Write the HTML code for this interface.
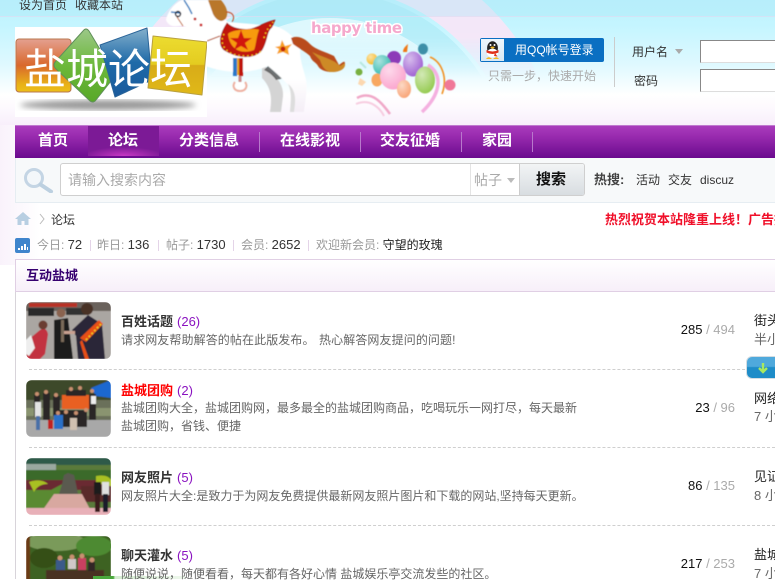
<!DOCTYPE html>
<html lang="zh"><head><meta charset="utf-8"><title>盐城论坛</title>
<style>
html,body{margin:0;padding:0}
body{width:775px;height:579px;overflow:hidden;position:relative;background:#fff;font:12px/16px "Liberation Sans","WenQuanYi Zen Hei","Noto Sans CJK SC",sans-serif;color:#444}
.t{position:absolute;white-space:nowrap;line-height:16px}
.b{font-weight:bold}
.a{position:absolute}
.ttl{font-weight:bold;color:#333;left:121px;font-size:13px;margin-top:1px}
.ttl i{font-style:normal;font-weight:normal;color:#8a12c0;margin-left:4px}
.d{left:121px;color:#666}
.n{color:#fff;font-size:15px;font-weight:bold;top:133px}
.s{position:absolute;top:132px;width:1px;height:20px;background:#b878cc}
.dash{position:absolute;left:29px;width:746px;border-top:1px dashed #cfcfcf}
.c{right:40px;color:#111;font-size:13px}.c i{font-style:normal;color:#aaa}
.l{left:754px;color:#222;font-size:13px}
.m{left:754px;color:#666;font-size:13px}
.st{font-size:12px;color:#999}.st b{font-weight:normal;font-size:13px;color:#333}
.th{position:absolute;left:26px;width:85px;height:57px;border-radius:6px;overflow:hidden}
</style></head><body>
<div class="a" style="left:0;top:0;width:775px;height:125px;background:linear-gradient(#bff3fd 0,#c4f5ff 25px,#dff9ff 65px,#fff 95px,#fdf9fe 108px,#f8effb 125px)"></div>
<div class="a" style="left:0;top:125px;width:40px;height:140px;background:linear-gradient(90deg,#f9f2fb,#fff)"></div>
<svg class="a" style="left:0;top:0" width="775" height="125" viewBox="0 0 775 125">
<defs><filter id="bl"><feGaussianBlur stdDeviation=".5"/></filter>
<linearGradient id="fd" x1="0" y1="0" x2="0" y2="125" gradientUnits="userSpaceOnUse"><stop offset="0" stop-color="#fff"/><stop offset=".3" stop-color="#fff"/><stop offset=".62" stop-color="#000"/></linearGradient>
<mask id="mk"><rect width="775" height="125" fill="url(#fd)"/></mask>
<radialGradient id="bb" cx=".35" cy=".3" r=".8"><stop offset="0" stop-color="#fff"/><stop offset="1" stop-color="#fff" stop-opacity="0"/></radialGradient>
<linearGradient id="leg" x1="0" y1="0" x2="0" y2="1"><stop offset=".7" stop-color="#fff"/><stop offset="1" stop-color="#f4eef6"/></linearGradient>
</defs>
<g mask="url(#mk)" fill="none">
<circle cx="330" cy="170" r="205" stroke="#f6e6f8" stroke-width="46" stroke-opacity=".95"/>
<circle cx="330" cy="170" r="165" stroke="#a8e8f4" stroke-opacity=".55" stroke-width="26"/>
<circle cx="330" cy="170" r="130" stroke="#e8fafc" stroke-opacity=".7" stroke-width="44"/>
</g>
<rect y="0" width="775" height="17" fill="#a8e4f5" fill-opacity=".35"/>
<rect y="16" width="775" height="1" fill="#f0d8f0" fill-opacity=".5"/>
<g filter="url(#bl)">
<path d="M262 64 C272 72 284 82 283 96 L281 112 L270 112 C272 100 272 88 262 78Z" fill="#d4d4d4"/>
<path d="M268 66 C274 66 280 72 284 78 L276 80 C272 74 268 72 264 70Z" fill="#444" fill-opacity=".75"/>
<path d="M166 20 C168 10 176 2 182 0 L208 0 C214 8 220 16 228 22 L275 26 C288 30 298 40 300 50 C300 62 304 70 306 80 C308 90 305 100 304 112 L290 112 C291 100 292 92 289 86 C282 78 275 72 268 66 C250 74 228 74 205 66 L195 40 C190 30 186 24 178 26 C172 27 168 25 166 20Z" fill="url(#leg)"/>
<path d="M288 84 C296 90 296 100 294 112 L290 112 C291 100 292 92 288 84Z" fill="#ddd"/>
<path d="M208 0 L221 0 C226 6 229 12 226 18 C222 24 216 20 213 14Z" fill="#b9772b"/>
<path d="M226 12 C232 12 236 16 232 22" stroke="#c0431a" fill="none"/>
<path d="M207 41 L220 36" stroke="#b54a1c" stroke-width="1.2"/>
<path d="M184 0 L189 8 L192 14 M171 12 L180 13" stroke="#2a7dc0" stroke-width="1.5" fill="none"/>
<path d="M177 17 L183 26" stroke="#c06020" fill="none"/>
<circle cx="178" cy="14" r="2.5" fill="none" stroke="#112" stroke-width="1.4"/>
<path d="M227 23 C221 32 217 44 224 50 C240 60 256 58 262 50 C268 40 266 32 272 27 L275 20 C264 22 258 28 250 29 C240 30 232 28 227 23Z" fill="#c0140f" stroke="#8e0d0a" stroke-width=".6"/>
<path d="M228 34 C232 29 258 28 259 30 C256 38 256 46 254 50 C244 54 230 52 228 34Z" fill="#f79a10"/>
<path d="M241 30 L244 38 L252 38 L245 43 L248 50 L241 46 L234 50 L237 43 L230 38 L238 38Z" fill="#d2180f"/>
<path d="M224 34 C219 42 224 52 236 55 C246 57 258 56 262 50 M264 38 C266 30 270 26 273 22" stroke="#f8d020" stroke-width="1.4" stroke-dasharray="1.4 3" fill="none"/>
<rect x="233" y="58" width="4" height="18" fill="#2a78c8"/><rect x="237" y="58" width="3" height="17" fill="#e8a820"/><rect x="239" y="58" width="4" height="18" fill="#c0140f"/>
<path d="M240 76 L240 82" stroke="#c88" stroke-width="3"/>
<path d="M235 82 C232 86 234 91 240 91 C246 91 248 86 245 82" fill="#fff" stroke="#eeb0a0" stroke-width="2"/>
<path d="M282 40 L285 46 L292 44 L288 49 L289 55 L283 52 L277 54 L279 49 L275 47 L280 46Z" fill="#f8a020"/><circle cx="283" cy="49" r="2.4" fill="#c0200f"/>
<circle cx="195" cy="19" r="1.4" fill="#c02020"/><circle cx="201" cy="25" r="1.5" fill="#d03030"/>
<path d="M291 38 C297 35 305 38 310 44 C316 50 326 52 334 56 L339 65 C343 62 345 60 345 64 C345 70 338 72 332 72 C326 72 320 70 318 66 C316 62 312 62 310 56 C306 52 298 48 293 44Z" fill="#b94b1c"/>
<path d="M312 52 C320 56 328 58 335 62 L340 66 C344 64 345 62 345 65 C344 71 336 72 330 72 C324 70 322 66 320 60Z" fill="#cd8a28"/>
<g transform="translate(300 0)">
<path d="M57 98 C72 90 82 103 90 114" stroke="#f0a8c8" stroke-width="2.5" fill="none"/>
<path d="M56 104 C70 98 80 108 84 116" stroke="#f5c0d8" stroke-width="2" fill="none" opacity=".8"/>
<path d="M130 57 C142 62 148 78 142 94" stroke="#f09020" stroke-width="1.6" fill="none"/>
<path d="M128 65 C144 75 140 95 122 112" stroke="#f4b0e0" stroke-width="3.5" fill="none"/>
<circle cx="72" cy="59" r="5.5" fill="#f7b81e"/><circle cx="72" cy="59" r="5.5" fill="url(#bb)" opacity=".6"/>
<ellipse cx="94" cy="58" rx="7" ry="7" fill="#8d3bb8"/>
<ellipse cx="82" cy="65" rx="9" ry="10" fill="#2cb8ac"/><ellipse cx="82" cy="65" rx="9" ry="10" fill="url(#bb)" opacity=".6"/>
<ellipse cx="113" cy="64" rx="10" ry="12.5" fill="#9a58d0"/><ellipse cx="113" cy="64" rx="10" ry="12.5" fill="url(#bb)" opacity=".6"/>
<ellipse cx="123" cy="49" rx="5" ry="5.5" fill="#3c8fa8"/>
<ellipse cx="77" cy="80" rx="5.5" ry="6.5" fill="#f8a860"/>
<ellipse cx="93" cy="76" rx="13" ry="13.5" fill="#fba0cc"/><ellipse cx="93" cy="76" rx="13" ry="13.5" fill="url(#bb)" opacity=".6"/>
<ellipse cx="104" cy="89" rx="7" ry="9" fill="#f8a070"/><ellipse cx="104" cy="89" rx="7" ry="9" fill="url(#bb)" opacity=".6"/>
<ellipse cx="125" cy="80" rx="10" ry="13.5" fill="#90c848"/><ellipse cx="125" cy="80" rx="10" ry="13.5" fill="url(#bb)" opacity=".6"/>
<circle cx="150" cy="85" r="5.5" fill="#f07898"/>
<circle cx="59" cy="72" r="3.5" fill="#78b040"/>
<path d="M103 52 C103 48 106 46 108 44 L107 52Z" fill="#f07818"/>
<path d="M60 78 L66 82 L62 86 L58 84Z" fill="#fcd8b0"/>
<path d="M60 62 L66 68" stroke="#b8e8e0" stroke-width="2"/>
</g>
</g>
<text x="311" y="33" font-family="DejaVu Sans" font-size="15" font-weight="bold" fill="#f5a8cc" stroke="#fff" stroke-width="3" paint-order="stroke" textLength="91">happy time</text>
</svg>
<span class="t" style="left:19px;top:-3px;color:#333">设为首页</span>
<span class="t" style="left:75px;top:-3px;color:#333">收藏本站</span>
<div class="a" style="left:15px;top:27px;width:192px;height:90px;background:#fff"></div>
<svg class="a" style="left:15px;top:27px" width="192" height="90" viewBox="0 0 192 90">
<defs><linearGradient id="l1" x1="0" y1="0" x2="0" y2="1"><stop offset="0" stop-color="#e4a090"/><stop offset=".5" stop-color="#d9682c"/><stop offset=".85" stop-color="#e8b018"/><stop offset="1" stop-color="#ecc018"/></linearGradient>
<linearGradient id="l2" x1="0" y1="0" x2="0" y2="1"><stop offset="0" stop-color="#9cc888"/><stop offset=".5" stop-color="#6cb83a"/><stop offset="1" stop-color="#58a828"/></linearGradient>
<linearGradient id="l3" x1="0" y1="0" x2="0" y2="1"><stop offset="0" stop-color="#84b0cc"/><stop offset=".5" stop-color="#1e6aa8"/><stop offset="1" stop-color="#1a5a9c"/></linearGradient>
<linearGradient id="l4" x1="0" y1="0" x2="0" y2="1"><stop offset="0" stop-color="#ecdc30"/><stop offset=".48" stop-color="#e4cc20"/><stop offset=".5" stop-color="#d8ac18"/><stop offset="1" stop-color="#e0b818"/></linearGradient>
<filter id="sh"><feGaussianBlur stdDeviation="3"/></filter></defs>
<ellipse cx="93" cy="78" rx="88" ry="5" fill="#999" filter="url(#sh)"/>
<rect x="1" y="12" width="55" height="53" rx="3" fill="url(#l1)" stroke="#b87850"/>
<path d="M68 4 Q71 0 74 4 L98 44 Q100 50 96 54 L81 73 Q78 77 74 73 L41 42 Q37 38 41 34Z" fill="url(#l2)" stroke="#60905a" stroke-width="1"/>
<path d="M85 18 L132 1 L137 53 L100 70Z" fill="url(#l3)" stroke="#2a6498" stroke-width="1" stroke-linejoin="round"/>
<path d="M138 9 L192 15 L187 68 L133 61Z" fill="url(#l4)" stroke="#b8a040" stroke-linejoin="round"/>
</svg>
<span class="t" style="left:24px;top:42px;line-height:50px;font-size:42px;color:#fff;font-family:'WenQuanYi Zen Hei','Noto Sans CJK SC',sans-serif">盐城论坛</span>
<div class="a" style="left:480px;top:38px;width:124px;height:24px;background:#0a6fc2;border-radius:2px"></div>
<div class="a" style="left:481px;top:39px;width:23px;height:22px;background:linear-gradient(#eef6fc,#d8e8f4)"></div>
<svg class="a" style="left:485px;top:41px" width="15" height="18" viewBox="0 0 15 18"><ellipse cx="7.5" cy="7" rx="5.4" ry="6.8" fill="#222"/><ellipse cx="7.5" cy="12" rx="5.5" ry="4.4" fill="#fff"/><path d="M1.5 9 Q7.5 12 13.5 9 L13.5 11.5 Q7.5 14.5 1.5 11.5Z" fill="#e0301a"/><path d="M10 12 L12.5 15.5 L9 15Z" fill="#e0301a"/><ellipse cx="7.5" cy="6.5" rx="2" ry="1" fill="#f5b820"/><circle cx="5.5" cy="4" r="1" fill="#fff"/><circle cx="9.5" cy="4" r="1" fill="#fff"/><path d="M1 18 Q3.5 14.5 7 18Z M8 18 Q11.5 14.5 14 18Z" fill="#f5b820"/></svg>
<span class="t" style="left:515px;top:42px;color:#fff">用QQ帐号登录</span>
<span class="t" style="left:488px;top:68px;color:#aaa">只需一步，快速开始</span>
<div class="a" style="left:614px;top:37px;width:1px;height:50px;background:#ccc"></div>
<span class="t" style="left:632px;top:44px;color:#333">用户名</span>
<div class="a" style="left:675px;top:49px;border:4px solid transparent;border-top:5px solid #aaa;border-bottom:0"></div>
<span class="t" style="left:634px;top:73px;color:#333">密码</span>
<div class="a" style="left:700px;top:40px;width:80px;height:21px;background:#fff;border:1px solid #ddd;border-top-color:#888;border-left-color:#888"></div>
<div class="a" style="left:700px;top:69px;width:80px;height:21px;background:#fff;border:1px solid #ddd;border-top-color:#888;border-left-color:#888"></div>
<div class="a" style="left:15px;top:125px;width:760px;height:33px;background:linear-gradient(#a93cbc 0,#9a2cb0 30%,#6a0a8e 100%);border-top:1px solid #c07ad0;box-sizing:border-box"></div>
<div class="a" style="left:88px;top:126px;width:71px;height:30px;background:radial-gradient(ellipse 40px 9px at 50% 100%,#c838c4,rgba(200,56,196,0) 100%),#7c1a96"></div>
<span class="t n" style="left:38px">首页</span>
<span class="t n" style="left:108px">论坛</span>
<span class="t n" style="left:179px">分类信息</span><i class="s" style="left:259px"></i>
<span class="t n" style="left:280px">在线影视</span><i class="s" style="left:360px"></i>
<span class="t n" style="left:380px">交友征婚</span><i class="s" style="left:461px"></i>
<span class="t n" style="left:482px">家园</span><i class="s" style="left:532px"></i>
<div class="a" style="left:15px;top:158px;width:760px;height:45px;box-sizing:border-box;background:#f7f9fa;border:1px solid #e6edf2;border-top:0;border-right:0"></div>
<svg class="a" style="left:23px;top:168px" width="31" height="25" viewBox="0 0 31 25"><circle cx="11" cy="10" r="8.5" fill="#f3f7fa" stroke="#c4d5e4" stroke-width="3"/><path d="M17.5 16.5 L28 23.5" stroke="#bcd0e0" stroke-width="4" stroke-linecap="round"/></svg>
<div class="a" style="left:60px;top:163px;width:525px;height:33px;box-sizing:border-box;background:#fff;border:1px solid #cfcfcf;border-radius:3px"></div>
<span class="t" style="left:68px;top:172px;font-size:14px;color:#aaa">请输入搜索内容</span>
<div class="a" style="left:470px;top:164px;width:1px;height:31px;background:#e4e4e4"></div>
<span class="t" style="left:474px;top:172px;font-size:14px;color:#aaa">帖子</span>
<div class="a" style="left:507px;top:178px;border:4px solid transparent;border-top:5px solid #bbb;border-bottom:0"></div>
<div class="a" style="left:519px;top:164px;width:65px;height:31px;box-sizing:border-box;border-left:1px solid #ccc;background:linear-gradient(#f2f4f5,#d8dde1);border-radius:0 2px 2px 0"></div>
<span class="t b" style="left:536px;top:172px;font-size:15px;color:#111">搜索</span>
<span class="t b" style="left:594px;top:172px;color:#444;font-size:13px">热搜:</span>
<span class="t" style="left:636px;top:172px;color:#333">活动</span>
<span class="t" style="left:668px;top:172px;color:#333">交友</span>
<span class="t" style="left:700px;top:172px;color:#333">discuz</span>
<svg class="a" style="left:15px;top:212px" width="16" height="14" viewBox="0 0 16 14"><path d="M8 0 L16 7 L13.5 7 L13.5 13 L9.5 13 L9.5 9 L6.5 9 L6.5 13 L2.5 13 L2.5 7 L0 7Z" fill="#b8cfe2"/></svg>
<svg class="a" style="left:39px;top:213px" width="6" height="12" viewBox="0 0 6 12"><path d="M1 1 L5 6 L1 11" fill="none" stroke="#bbb"/></svg>
<span class="t" style="left:51px;top:212px;color:#333">论坛</span>
<span class="t b" style="left:605px;top:212px;color:#f0102a;font-size:13px">热烈祝贺本站隆重上线！广告招商中</span>
<svg class="a" style="left:15px;top:238px" width="15" height="15" viewBox="0 0 15 15"><rect width="15" height="15" rx="2" fill="#3f85cc"/><path d="M3 12h2v-2H3zM6 12h2V8H6zM9 12h2V6H9zM12 12h1V9h-1z" fill="#fff"/></svg>
<span class="t st" style="left:37px;top:237px">今日: <b>72</b></span>
<i class="a" style="left:90px;top:240px;width:1px;height:11px;background:#e4d4e8"></i>
<span class="t st" style="left:97px;top:237px">昨日: <b>136</b></span>
<i class="a" style="left:158px;top:240px;width:1px;height:11px;background:#e4d4e8"></i>
<span class="t st" style="left:166px;top:237px">帖子: <b>1730</b></span>
<i class="a" style="left:233px;top:240px;width:1px;height:11px;background:#e4d4e8"></i>
<span class="t st" style="left:241px;top:237px">会员: <b>2652</b></span>
<i class="a" style="left:308px;top:240px;width:1px;height:11px;background:#e4d4e8"></i>
<span class="t st" style="left:316px;top:237px">欢迎新会员: <span style="color:#222">守望的玫瑰</span></span>
<div class="a" style="left:15px;top:259px;width:760px;height:320px;box-sizing:border-box;border-left:1px solid #d8d4da;background:#fff"></div>
<div class="a" style="left:15px;top:259px;width:760px;height:33px;box-sizing:border-box;border:1px solid #e0cfe4;border-right:0;background:linear-gradient(#fff,#f7eff9)"></div>
<span class="t b" style="left:26px;top:268px;color:#360070;font-size:13px">互动盐城</span>
<div class="th" style="top:302px"><svg width="85" height="57" viewBox="0 0 85 57"><defs><filter id="tb"><feGaussianBlur stdDeviation=".6"/></filter></defs><g filter="url(#tb)"><rect width="85" height="57" fill="#aaa6a2"/><rect width="85" height="9" fill="#6a625c"/><rect x="3" y="1" width="48" height="4" fill="#b83028"/><rect x="2" y="6" width="26" height="8" fill="#2a2a2a"/><rect x="40" y="6" width="22" height="7" fill="#333"/><path d="M2 38 L14 28 Q20 24 22 32 L19 52 L14 57 L0 57Z" fill="#c23040"/><circle cx="17" cy="23" r="4.5" fill="#6a3c30"/><path d="M0 38 L5 33 L9 46 L3 54 L0 52Z" fill="#eee"/><path d="M28 18 L42 16 L47 57 L28 57Z" fill="#1e1a1a"/><rect x="35" y="18" width="3" height="22" fill="#7a6a5a"/><circle cx="35" cy="11" r="4.5" fill="#8a6450"/><path d="M46 28 L62 13 L76 22 L79 57 L52 57 L50 34Z" fill="#2a2838"/><circle cx="61" cy="7" r="6" fill="#4a3028"/><path d="M54 36 L60 40 L77 22 L73 18 Z M56 38 L63 57 L59 57 L54 40Z" fill="#e85018"/><path d="M60 38 L75 22" stroke="#f0c020" stroke-width="2" stroke-dasharray="2 2"/><rect x="38" y="29" width="11" height="3" fill="#c8a090"/></g></svg></div>
<div class="th" style="top:380px"><svg width="85" height="57" viewBox="0 0 85 57"><g filter="url(#tb)"><rect width="85" height="57" fill="#6b6f5a"/><rect width="85" height="20" fill="#3c4a2c"/><path d="M65 8 L85 0 L85 18 L70 16Z" fill="#1a68d0"/><rect y="40" width="85" height="17" fill="#a8a8a8"/><rect y="28" width="85" height="8" fill="#8a9470"/><rect x="36" y="15" width="28" height="14" fill="#e86020"/><g fill="#2a2628"><rect x="8" y="15" width="6" height="22"/><rect x="17" y="13" width="7" height="27"/><rect x="27" y="16" width="7" height="20"/><rect x="33" y="30" width="28" height="17"/><rect x="63" y="14" width="7" height="26"/><rect x="40" y="10" width="20" height="6"/></g><rect x="9" y="22" width="6" height="15" fill="#e4e4e4"/><rect x="28" y="35" width="9" height="14" fill="#2a70c8"/><rect x="10" y="36" width="4" height="14" fill="#4a70a8"/><rect x="44" y="38" width="7" height="12" fill="#d0c0b0"/><rect x="22" y="40" width="5" height="9" fill="#c02020"/><rect x="65" y="16" width="5" height="8" fill="#eee"/><g fill="#c89070"><circle cx="11" cy="14" r="2"/><circle cx="20" cy="12" r="2"/><circle cx="30" cy="15" r="2"/><circle cx="45" cy="9" r="2"/><circle cx="54" cy="8" r="2"/><circle cx="66" cy="11" r="2"/><circle cx="40" cy="32" r="2"/><circle cx="50" cy="33" r="2"/><circle cx="60" cy="30" r="2"/><circle cx="32" cy="33" r="2"/></g></g></svg></div>
<div class="th" style="top:458px"><svg width="85" height="57" viewBox="0 0 85 57"><g filter="url(#tb)"><rect width="85" height="57" fill="#5a7a3a"/><rect width="85" height="7" fill="#2e5a4a"/><rect y="6" width="30" height="6" fill="#9aa8a0"/><rect y="12" width="85" height="10" fill="#3a6a2a"/><rect y="22" width="85" height="10" fill="#6a2a30"/><path d="M0 32 L25 32 L40 24 L30 50 L0 50Z" fill="#5a8a30"/><path d="M3 24 Q15 20 22 26 Q12 26 8 34 Z" fill="#a8c020"/><path d="M70 18 Q82 16 85 22 L85 34 Q78 26 70 24Z" fill="#a8c020"/><rect x="55" y="28" width="30" height="16" fill="#5a2a2a"/><path d="M44 36 L56 36 L65 53 L16 53 L28 36Z" fill="#d8a8a0"/><path d="M33 36 L52 36 L50 26 L48 17 L42 15 L38 17 L36 26Z" fill="#5a5a50"/><rect y="50" width="85" height="7" fill="#e8b0b8"/><rect x="68" y="24" width="7" height="13" fill="#1a1a1a"/><rect x="76" y="24" width="7" height="13" fill="#e0e0e0"/><rect x="69" y="36" width="5" height="18" fill="#3a1a1a"/><rect x="77" y="36" width="5" height="18" fill="#1a1a2a"/></g></svg></div>
<div class="th" style="top:536px;height:43px;border-radius:6px 6px 0 0"><svg width="85" height="57" viewBox="0 0 85 57"><g filter="url(#tb)"><rect width="85" height="57" fill="#3e6222"/><ellipse cx="30" cy="6" rx="30" ry="9" fill="#7a9a5a"/><ellipse cx="68" cy="10" rx="18" ry="10" fill="#4e8a30"/><ellipse cx="18" cy="22" rx="14" ry="10" fill="#345018"/><rect x="0" y="0" width="4" height="57" fill="#6a3a18"/><rect x="20" y="34" width="58" height="23" fill="#4a3024"/><rect x="52" y="22" width="8" height="12" fill="#c84060"/><rect x="30" y="24" width="9" height="10" fill="#3a5a8a"/><rect x="42" y="23" width="8" height="10" fill="#d0c8c8"/><rect x="62" y="26" width="7" height="9" fill="#302828"/><g fill="#c89070"><circle cx="34" cy="22" r="2.5"/><circle cx="46" cy="21" r="2.5"/><circle cx="56" cy="20" r="2.5"/><circle cx="66" cy="24" r="2.5"/></g></g></svg></div>
<div class="a" style="left:93px;top:576px;width:92px;height:3px;background:linear-gradient(90deg,#4aa83c 0,#4aa83c 22%,#d4ecd0 24%,#eef8ec 100%)"></div>
<div class="dash" style="top:369px"></div>
<div class="dash" style="top:447px"></div>
<div class="dash" style="top:525px"></div>
<span class="t ttl" style="top:313px">百姓话题<i>(26)</i></span>
<span class="t d" style="top:332px;word-spacing:1px;letter-spacing:.1px">请求网友帮助解答的帖在此版发布。 热心解答网友提问的问题!</span>
<span class="t ttl" style="top:382px"><span style="color:#f00">盐城团购</span><i>(2)</i></span>
<span class="t d" style="top:400px">盐城团购大全，盐城团购网，最多最全的盐城团购商品，吃喝玩乐一网打尽，每天最新</span>
<span class="t d" style="top:418px">盐城团购，省钱、便捷</span>
<span class="t ttl" style="top:469px">网友照片<i>(5)</i></span>
<span class="t d" style="top:488px">网友照片大全:是致力于为网友免费提供最新网友照片图片和下载的网站,坚持每天更新。</span>
<span class="t ttl" style="top:547px">聊天灌水<i>(5)</i></span>
<span class="t d" style="top:566px">随便说说，随便看看，每天都有各好心情 盐城娱乐亭交流发些的社区。</span>
<span class="t c" style="top:322px">285 <i>/ 494</i></span>
<span class="t c" style="top:400px">23 <i>/ 96</i></span>
<span class="t c" style="top:478px">86 <i>/ 135</i></span>
<span class="t c" style="top:556px">217 <i>/ 253</i></span>
<span class="t l" style="top:313px">街头巷尾</span>
<span class="t m" style="top:332px">半小时前</span>
<span class="t l" style="top:391px">网络购物</span>
<span class="t m" style="top:409px">7 小时前</span>
<span class="t l" style="top:469px">见证幸福</span>
<span class="t m" style="top:488px">8 小时前</span>
<span class="t l" style="top:547px">盐城美食</span>
<span class="t m" style="top:566px">7 小时前</span>
<div class="a" style="left:746px;top:356px;width:40px;height:23px;box-sizing:border-box;border:1px solid #d4dde2;border-radius:6px;background:linear-gradient(#4fa9dc 0,#4fa9dc 45%,#1e8cc8 50%,#1e8cc8 100%)"></div>
<svg class="a" style="left:757px;top:362px" width="12" height="12" viewBox="0 0 12 12"><path d="M6 1 V9 M2 6 L6 10 L10 6" fill="none" stroke="#a8e860" stroke-width="2.4"/></svg>
</body></html>
